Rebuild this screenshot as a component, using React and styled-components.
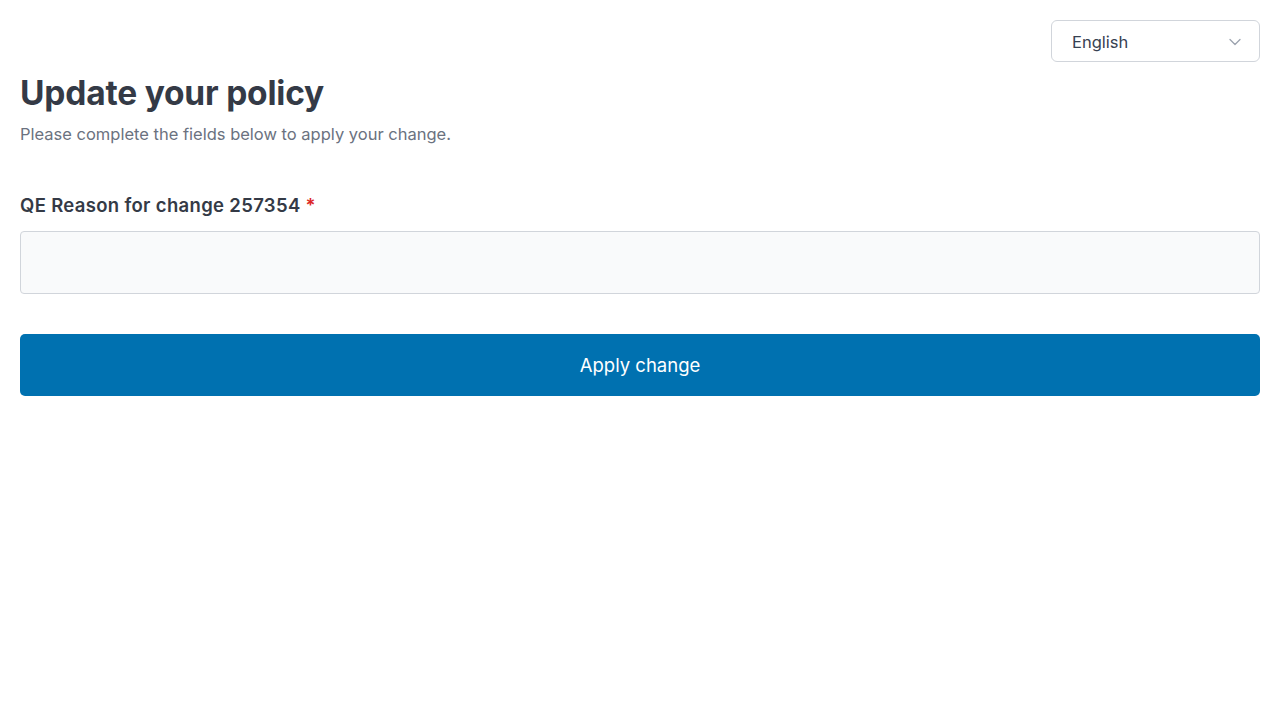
import React, { useState } from 'react';
import styled, { createGlobalStyle } from 'styled-components';

const GlobalStyle = createGlobalStyle`
  html, body { margin: 0; padding: 0; background: #fff; }
  body {
    font-family: Inter, "Noto Sans", "Liberation Sans", sans-serif;
    color: #374151;
    -webkit-font-smoothing: antialiased;
  }
  * { box-sizing: border-box; }
`;

const Page = styled.div`
  padding: 20px;
  display: flex;
  flex-direction: column;
`;

const TopBar = styled.div`
  display: flex;
  justify-content: flex-end;
`;

const LangSelect = styled.div`
  width: 209px;
  height: 42px;
  border: 1px solid #d1d5db;
  border-radius: 6px;
  background: #fff;
  display: flex;
  align-items: center;
  justify-content: space-between;
  padding: 1px 18px 0 20px;
  font-size: 16.5px;
  color: #374151;
  cursor: pointer;
`;

const Title = styled.h1`
  margin: 10px 0 0 0;
  font-size: 33.5px;
  line-height: 42px;
  font-weight: 700;
  color: #343a46;
  letter-spacing: -0.2px;
`;

const Subtitle = styled.p`
  margin: 9px 0 0 0;
  font-size: 16.5px;
  line-height: 22px;
  color: #6b7280;
`;

const Field = styled.div`
  margin-top: 48px;
  display: flex;
  flex-direction: column;
`;

const Label = styled.label`
  font-size: 18.5px;
  line-height: 24px;
  font-weight: 600;
  color: #343a46;
  letter-spacing: 0.33px;
`;

const Required = styled.span`
  color: #dc2626;
`;

const Input = styled.input`
  margin-top: 14px;
  height: 63px;
  width: 100%;
  border: 1px solid #d1d5db;
  border-radius: 4px;
  background: #f9fafb;
  padding: 0 14px;
  font-size: 16px;
  font-family: inherit;
  outline: none;
`;

const Button = styled.button`
  margin-top: 40px;
  height: 62px;
  width: 100%;
  border: none;
  border-radius: 5px;
  background: #0071b0;
  color: #fff;
  font-family: inherit;
  font-size: 18.5px;
  cursor: pointer;
`;

const Chevron = () => (
  <svg width="12" height="8" viewBox="0 0 12 8" fill="none">
    <path d="M1 1.5l5 5 5-5" stroke="#9ca3af" strokeWidth="1.3" strokeLinecap="round" strokeLinejoin="round" />
  </svg>
);

export default function App() {
  const [reason, setReason] = useState('');
  return (
    <Page>
      <GlobalStyle />
      <TopBar>
        <LangSelect>
          <span>English</span>
          <Chevron />
        </LangSelect>
      </TopBar>
      <Title>Update your policy</Title>
      <Subtitle>Please complete the fields below to apply your change.</Subtitle>
      <Field>
        <Label>QE Reason for change 257354 <Required>*</Required></Label>
        <Input value={reason} onChange={e => setReason(e.target.value)} />
      </Field>
      <Button>Apply change</Button>
    </Page>
  );
}
